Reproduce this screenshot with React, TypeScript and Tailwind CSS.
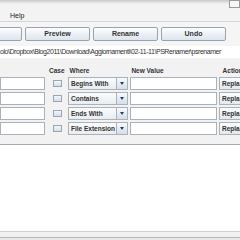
import React from "react";

const btn =
  "h-[14px] w-[65px] shrink-0 flex items-center justify-center rounded-[2px] border border-[#9aa3ad] bg-gradient-to-b from-[#fdfdfe] to-[#dde5ee] text-[7px] font-bold text-[#333]";

function Row({ where }: { where: string }) {
  return (
    <div className="flex h-[13px] items-center">
      <div className="h-[13px] w-[45px] shrink-0 border border-[#a9b1ba] bg-white" />
      <div className="ml-[8px] h-[7px] w-[9px] shrink-0 border border-[#9aa6b4] bg-gradient-to-b from-[#f4f7fa] to-[#d3dde8]" />
      <div className="ml-[6px] flex h-[13px] w-[60px] shrink-0">
        <div className="flex h-full flex-1 items-center border border-[#a9b1ba] bg-gradient-to-b from-[#fafbfc] to-[#e9edf1] pl-[2px] text-[6.5px] font-bold text-[#333]">
          {where}
        </div>
        <div className="flex h-full w-[11px] items-center justify-center border border-l-0 border-[#a9b1ba] bg-gradient-to-b from-[#f8fafc] to-[#d6dee7]">
          <div className="h-0 w-0 border-x-[2.5px] border-t-[3px] border-x-transparent border-t-[#1f3f6b]" />
        </div>
      </div>
      <div className="ml-[2px] h-[13px] w-[87px] shrink-0 border border-[#a9b1ba] bg-white" />
      <div className="ml-[2px] flex h-[13px] w-[30px] shrink-0 items-center border border-[#a9b1ba] bg-gradient-to-b from-[#fbfcfd] to-[#e4e9ee] pl-[2px] text-[6.5px] font-bold text-[#333]">
        Repla
      </div>
    </div>
  );
}

export default function App() {
  return (
    <div
      className="flex h-[240px] w-[240px] flex-col overflow-hidden bg-white"
      style={{ fontFamily: '"Liberation Sans", Arial, sans-serif' }}
    >
      <div className="relative h-[4px] shrink-0 bg-gradient-to-b from-[#c9c9c9] to-[#f3f3f3]">
        <div className="absolute right-0 top-0 h-[8px] w-[11px] border border-[#9a9a9a] bg-[#f6f6f6]" />
      </div>
      <div className="flex h-[18px] shrink-0 items-center border-b border-[#d4d4d4] bg-[#f3f3f3] pl-[10px] pt-[8px] text-[7px] text-[#222]">
        Help
      </div>
      <div className="flex shrink-0 flex-col bg-[#f5f5f5]">
        <div className="ml-[-43px] mt-[5px] flex gap-[3px]">
          <div className={btn}>Filter</div>
          <div className={btn}>Preview</div>
          <div className={btn}>Rename</div>
          <div className={btn}>Undo</div>
        </div>
        <div className="mt-[5px] h-[12px] overflow-hidden whitespace-nowrap bg-white pt-[2px] text-[7px] leading-[8px] tracking-[-0.45px] text-[#333]">
          <span>olo\Dropbox\Blog2011\Download\Aggiornamenti\02-11-11\PSRenamer\psrenamer</span>
        </div>
      </div>
      <div className="flex h-[87px] shrink-0 flex-col border-b border-[#a8a8a8] bg-[#f2f2f2]">
        <div className="mt-[9px] flex h-[8px] items-center whitespace-nowrap text-[6.5px] font-bold text-[#333]">
          <span className="ml-[49px]">Case</span>
          <span className="ml-[5px]">Where</span>
          <span className="ml-[42px]">New Value</span>
          <span className="ml-[59px]">Action</span>
        </div>
        <div className="mt-[2px] flex flex-col gap-[2px]">
          <Row where="Begins With" />
          <Row where="Contains" />
          <Row where="Ends With" />
          <Row where="File Extension" />
        </div>
      </div>
      <div className="flex-1 bg-white" />
      <div className="h-[1px] shrink-0 bg-[#d0d0d0]" />
      <div className="h-[5px] shrink-0 bg-[#f0f0f0]" />
      <div className="h-[3px] shrink-0 border-t border-[#b8b8b8] bg-[#e8e8e8]" />
    </div>
  );
}
